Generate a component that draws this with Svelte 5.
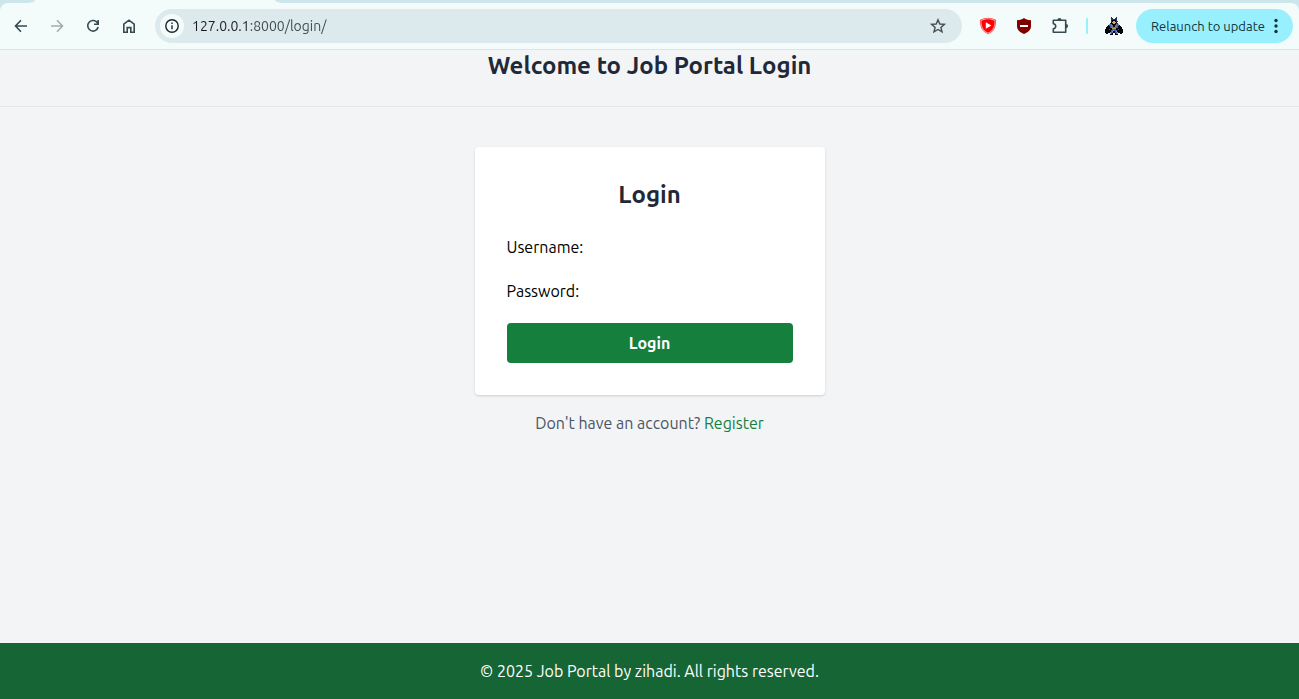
<script>
  let username = $state('');
  let password = $state('');
  let address = $state('127.0.0.1:8000/login/');

  // Pixel-art avatar: one letter per pixel, looked up in the palette.
  const palette = { k: '#05070d', n: '#26344f', b: '#3f62a8', l: '#7f9bd2', g: '#777a85', s: '#c9a58a', y: '#b29a51' };
  const avatar = [
    '......n....n......',
    '......nn..nn......',
    '......nnnnnn......',
    '......nkkkkn......',
    '......nkssknn.....',
    '......kssssk......',
    '.....nkkssknn.....',
    '....lbgkkkkgbl....',
    '...kbbggkkggbbk...',
    '..kkkbggkkggbkkk..',
    '.kkkkbggggggbkkkk.',
    '.kkkkkkyyyykkkkkk.',
    'kkkkbkkbbbbkkbkkkk',
    'kkkkkkbblbbbkkkkkk',
    'kkkkkkblkkblkkkkkk',
    'kkkkklbbkkbblkkkkk',
    '.kk..lbk..kbl..kk.',
    '.....kkk..kkk.....'
  ];
  const pixels = avatar.flatMap((row, y) =>
    [...row].map((c, x) => ({ x, y, fill: palette[c] })).filter((p) => p.fill)
  );
</script>

<div class="window">
  <div class="chrome">
    <div class="strip"><span class="tab-left"></span><span class="tab-right"></span></div>
    <div class="backing">
      <div class="toolbar">
        <nav class="nav" aria-label="Browser">
          <button class="icon" aria-label="Back">
            <svg viewBox="0 0 20 20"><path d="M16 10H5M10 4.3 4.5 10l5.5 5.7" /></svg>
          </button>
          <button class="icon" aria-label="Forward" disabled>
            <svg viewBox="0 0 20 20"><path d="M4 10h11M10 4.3l5.5 5.7-5.5 5.7" /></svg>
          </button>
          <button class="icon" aria-label="Reload">
            <svg viewBox="0 0 20 20"><path d="M14.7 7.2A5.3 5.3 0 1 0 15.2 11M15.2 4v4.2H11" /></svg>
          </button>
          <button class="icon" aria-label="Home">
            <svg viewBox="0 0 20 20"><path d="M4.8 8.2 10 4.2l5.2 4v8.1h-3.4v-4.7H8.2v4.7H4.8z" /></svg>
          </button>
        </nav>
        <div class="omnibox">
          <button class="info" aria-label="Site information">
            <svg viewBox="0 0 20 20"><circle cx="10" cy="10" r="6.2" /><path d="M10 9.3v4M10 6.4v1.5" /></svg>
          </button>
          <div class="url">
            <input aria-label="Address" bind:value={address} />
          </div>
          <button class="icon" aria-label="Bookmark">
            <svg class="star" viewBox="0 0 20 20"><path d="m10 3.8 1.8 4.2 4.6.4-3.5 3 1.1 4.5-4-2.4-4 2.4 1.1-4.5-3.5-3 4.6-.4z" /></svg>
          </button>
        </div>
        <div class="extensions">
          <button class="icon" aria-label="Video extension">
            <svg class="solid" viewBox="0 0 20 20">
              <path fill="#ff4a4a" d="M10 1.8c2.6 0 5.3.8 8 2 .3 6-1.4 11.6-8 14.4C3.4 15.4 1.7 9.8 2 3.8c2.7-1.200 5.400-2 8-2z" />
              <path fill="#ffb4b4" d="M10 2.6c2.4 0 4.8.7 7.2 1.8.2 5.4-1.4 10.4-7.2 13-5.8-2.6-7.4-7.600-7.200-13C5.200 3.300 7.600 2.600 10 2.600z" />
              <path fill="#ff0000" d="M10 3.200c2.300 0 4.400.6 6.600 1.600.1 5-1.300 9.600-6.600 12-5.300-2.400-6.700-7-6.600-12C5.600 3.800 7.700 3.200 10 3.200z" />
              <path fill="#fff" d="m7.800 6.200 5.600 3.200-5.600 3.300z" />
            </svg>
          </button>
          <button class="icon" aria-label="Content blocker">
            <svg class="solid" viewBox="0 0 20 20">
              <path fill="#800000" d="M10 2c2 1.500 4.600 2.200 7 2.200V10c0 3.900-2.700 6.200-7 8-4.300-1.800-7-4.100-7-8V4.200C5.400 4.200 8 3.500 10 2z" />
              <path fill="#fff" d="M6 9h8v2H6z" />
            </svg>
          </button>
          <button class="icon" aria-label="Extensions">
            <svg viewBox="0 0 20 20">
              <path d="M3.300 4.300h12.400v12H3.300v-3.400c3.200-.4 3.200-4.800 0-5.200z" stroke-linejoin="round" />
              <path class="nub" d="M7.500 4a2 2 0 0 1 4 0zM16 8a2 2 0 0 1 0 4.200z" />
            </svg>
          </button>
          <span class="divider"></span>
          <button class="icon" aria-label="Profile">
            <svg class="avatar" viewBox="0 0 18 18">
              {#each pixels as p}
                <rect x={p.x} y={p.y} width="1" height="1" fill={p.fill} />
              {/each}
            </svg>
          </button>
        </div>
        <button class="update">
          Relaunch to update
          <svg viewBox="0 0 4 16"><circle cx="2" cy="2.500" r="1.700" /><circle cx="2" cy="8" r="1.700" /><circle cx="2" cy="13.500" r="1.700" /></svg>
        </button>
      </div>
    </div>
  </div>

  <header><h1>Welcome to Job Portal Login</h1></header>

  <main>
    <form class="card" onsubmit={(e) => e.preventDefault()}>
      <h2>Login</h2>
      <div class="field">
        <label for="username">Username:</label>
        <input id="username" type="text" bind:value={username} />
      </div>
      <div class="field">
        <label for="password">Password:</label>
        <input id="password" type="password" bind:value={password} />
      </div>
      <button class="submit" type="submit">Login</button>
    </form>
    <p>Don't have an account? <a href="#register">Register</a></p>
  </main>

  <footer>© 2025 Job Portal by zihadi. All rights reserved.</footer>
</div>

<style>
  :global(body) { margin: 0; }
  * { box-sizing: border-box; }
  .window {
    min-height: 100vh;
    display: flex;
    flex-direction: column;
    background: #f3f4f6;
    color: #000;
    font: 16px/24px Ubuntu, "Noto Sans", sans-serif;
  }
  button, input {
    font: inherit;
    color: inherit;
    border: 0;
    padding: 0;
    background: none;
  }
  h1, h2, p { margin: 0; }
  h1, h2 {
    font-size: 24px;
    line-height: 32px;
    font-weight: 600;
    color: #1f2937;
    text-align: center;
  }

  .chrome { border-bottom: 1px solid #dbe5e6; }
  .strip { display: flex; height: 3px; background: #f4fbfb; }
  .strip span { background: #cde6eb; }
  .tab-left { width: 35px; border-bottom-right-radius: 8px 3px; }
  .tab-right { flex: 1; margin-left: 240px; border-bottom-left-radius: 8px 3px; }
  .backing { background: #cde6eb; }
  .toolbar {
    display: flex;
    align-items: center;
    height: 46px;
    padding: 0 6px 0 3px;
    background: #f4fbfb;
    border-radius: 8px 8px 0 0;
  }
  .nav { display: flex; margin-right: 8px; }
  .icon {
    display: grid;
    place-items: center;
    width: 36px;
    height: 34px;
    color: #344b50;
  }
  .icon:disabled { color: #a3adae; }
  svg {
    display: block;
    width: 20px;
    height: 20px;
    fill: none;
    stroke: currentColor;
    stroke-width: 1.6;
  }
  .solid { stroke: none; }
  .nub { fill: currentColor; stroke: none; }
  .star { stroke-width: 1.4; color: #454c4e; }
  .avatar { stroke: none; width: 18px; height: 18px; }
  .omnibox {
    flex: 1;
    display: flex;
    align-items: center;
    height: 34px;
    padding: 0 6px 0 5px;
    border-radius: 17px;
    background: #dceaed;
  }
  .info {
    display: grid;
    place-items: center;
    width: 24px;
    height: 24px;
    border-radius: 50%;
    background: #f4fbfb;
    color: #1d2426;
  }
  .info svg { stroke-width: 1.4; }
  .url { flex: 1; margin-left: 8px; }
  /* The host part is darker than the port and path. */
  .url input {
    display: block;
    width: 100%;
    font-size: 14px;
    outline: 0;
    color: transparent;
    caret-color: #191c1d;
    background: linear-gradient(90deg, #191c1d 4em, #40484a 4em);
    background-clip: text;
  }
  .extensions { display: flex; align-items: center; margin: 0 4px 0 8px; }
  .divider { width: 2px; height: 16px; margin: 0 8px; border-radius: 1px; background: #98efff; }
  .update {
    display: flex;
    align-items: center;
    justify-content: space-between;
    width: 157px;
    height: 34px;
    padding: 0 15px;
    border-radius: 17px;
    background: #98f0ff;
    color: #13343b;
    font-size: 13px;
    white-space: nowrap;
  }
  .update svg { width: 4px; height: 16px; fill: currentColor; stroke: none; }

  header { padding-bottom: 24px; border-bottom: 1px solid #e5e7eb; }
  main {
    flex: 1;
    display: flex;
    flex-direction: column;
    align-items: center;
    padding: 40px 16px;
  }
  .card {
    width: 100%;
    max-width: 350px;
    display: flex;
    flex-direction: column;
    gap: 20px;
    padding: 32px;
    border-radius: 4px;
    background: #fff;
    box-shadow: 0 1px 3px rgb(0 0 0 / 0.1), 0 1px 2px rgb(0 0 0 / 0.06);
  }
  h2 { margin-bottom: 4px; }
  .field { display: flex; gap: 4px; }
  .field input { flex: 1; min-width: 0; outline: 0; }
  .submit {
    padding: 8px 16px;
    border-radius: 4px;
    background: #15803d;
    color: #fff;
    font-weight: 600;
  }
  p { margin-top: 16px; color: #4b5563; }
  a { color: #15803d; text-decoration: none; }
  footer {
    padding: 16px;
    background: #166534;
    color: #fff;
    text-align: center;
  }
</style>
